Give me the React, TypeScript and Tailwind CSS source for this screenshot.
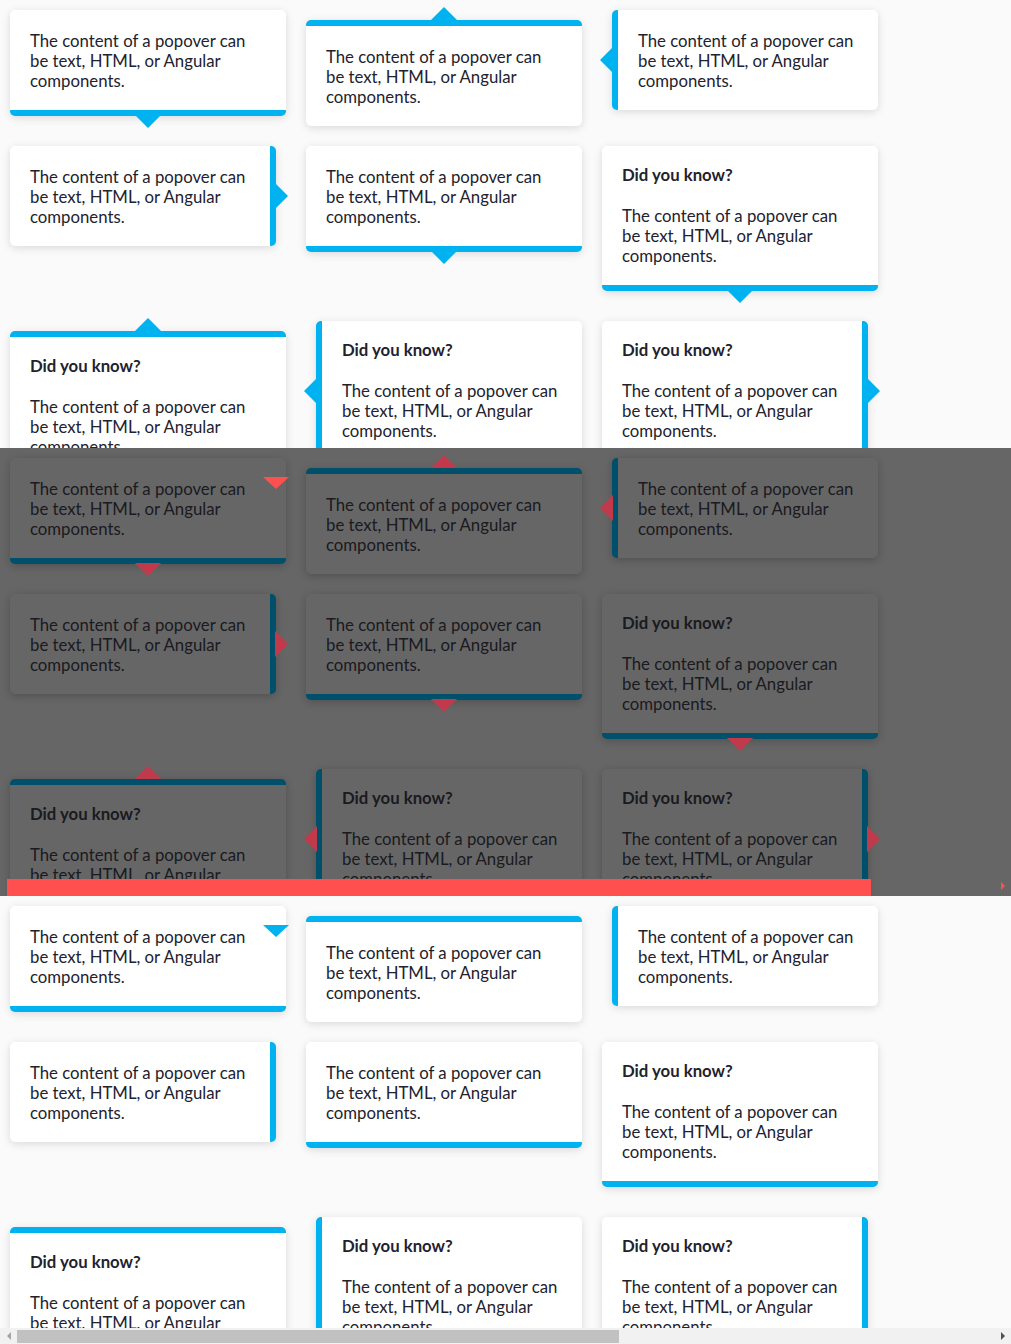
import React from "react";

type Place = "top" | "bottom" | "left" | "right";
type Mode = "expected" | "diff" | "actual";

const items: { place: Place; title?: boolean }[] = [
  { place: "bottom" },
  { place: "top" },
  { place: "left" },
  { place: "right" },
  { place: "bottom" },
  { place: "bottom", title: true },
  { place: "top", title: true },
  { place: "left", title: true },
  { place: "right", title: true },
];

const cellPad: Record<Place, string> = {
  top: "pt-[10px] w-[276px]",
  bottom: "pb-[10px] w-[276px]",
  left: "pl-[10px] w-[276px]",
  right: "pr-[10px] w-[276px]",
};

const cardBorder: Record<Place, string> = {
  top: "border-t-[6px] w-[276px]",
  bottom: "border-b-[6px] w-[276px]",
  left: "border-l-[6px] w-[266px]",
  right: "border-r-[6px] w-[266px]",
};

const arrowShape: Record<Place, string> = {
  bottom: "left-1/2 -translate-x-1/2 -bottom-[18px] border-x-[13px] border-x-transparent border-t-[13px]",
  top: "left-1/2 -translate-x-1/2 -top-[19px] border-x-[13px] border-x-transparent border-b-[13px]",
  left: "top-1/2 -translate-y-1/2 -left-[18px] border-y-[13px] border-y-transparent border-r-[13px]",
  right: "top-1/2 -translate-y-1/2 -right-[18px] border-y-[13px] border-y-transparent border-l-[13px]",
};

const arrowColorExpected: Record<Place, string> = {
  bottom: "border-t-[#00b2ef]",
  top: "border-b-[#00b2ef]",
  left: "border-r-[#00b2ef]",
  right: "border-l-[#00b2ef]",
};

const arrowColorDiff: Record<Place, string> = {
  bottom: "border-t-[#c13a4c]",
  top: "border-b-[#c13a4c]",
  left: "border-r-[#c13a4c]",
  right: "border-l-[#c13a4c]",
};

function Popover({ place, title, mode, first }: { place: Place; title?: boolean; mode: Mode; first: boolean }) {
  const diff = mode === "diff";
  const cardCls = diff
    ? "bg-[#666666] border-[#00506b] shadow-[0_2px_8px_rgba(0,0,0,0.22)] text-[#1a1a20]"
    : "bg-white border-[#00b2ef] shadow-[0_2px_8px_rgba(0,0,0,0.13)] text-[#22222e]";
  const showArrow = mode !== "actual";
  return (
    <div className={`m-[10px] ${cellPad[place]} flex ${place === "right" ? "justify-start" : "justify-end"}`}>
      <div className={`relative rounded-[5px] ${cardBorder[place]} ${cardCls}`}>
        {title && (
          <div className="px-5 pt-[19px] text-[16.75px] leading-5 font-bold whitespace-nowrap">Did you know?</div>
        )}
        <div className="px-5 pt-[21px] pb-[19px] text-[16.75px] leading-5 whitespace-nowrap">
          The content of a popover can
          <br />
          be text, HTML, or Angular
          <br />
          components.
        </div>
        {showArrow && (
          <div
            className={`absolute w-0 h-0 ${arrowShape[place]} ${diff ? arrowColorDiff[place] : arrowColorExpected[place]}`}
          />
        )}
        {first && mode === "actual" && (
          <div className="absolute left-[253px] top-[19px] w-0 h-0 border-x-[13px] border-x-transparent border-t-[12px] border-t-[#00b2ef]" />
        )}
        {first && mode === "diff" && (
          <div className="absolute left-[253px] top-[19px] w-0 h-0 border-x-[13px] border-x-transparent border-t-[12px] border-t-[#ff4f4f]" />
        )}
      </div>
    </div>
  );
}

function Grid({ mode }: { mode: Mode }) {
  return (
    <div className="flex flex-wrap items-start">
      {items.map((it, i) => (
        <Popover key={i} place={it.place} title={it.title} mode={mode} first={i === 0} />
      ))}
    </div>
  );
}

export default function App() {
  return (
    <div className="w-[1011px] font-['Lato',sans-serif]">
      {/* expected */}
      <div className="h-[448px] overflow-hidden bg-[#fafafa]">
        <Grid mode="expected" />
      </div>
      {/* diff */}
      <div className="relative h-[448px] overflow-hidden bg-[#666666]">
        <Grid mode="diff" />
        <div className="absolute left-[7px] top-[431px] w-[864px] h-[17px] bg-[#ff4f4f]" />
        <div className="absolute left-[1001px] top-[434px] w-0 h-0 border-y-[4px] border-y-transparent border-l-[4px] border-l-[#ff4f4f]" />
      </div>
      {/* actual */}
      <div className="h-[448px] flex flex-col bg-[#fafafa]">
        <div className="h-[432px] overflow-hidden">
          <Grid mode="actual" />
        </div>
        <div className="h-[16px] bg-[#f1f1f1] flex items-center">
          <div className="w-[17px] flex justify-center">
            <div className="w-0 h-0 border-y-[4px] border-y-transparent border-r-[4px] border-r-[#a3a3a3]" />
          </div>
          <div className="w-[602px] h-[13px] bg-[#c1c1c1]" />
          <div className="flex-1" />
          <div className="w-[17px] flex justify-center">
            <div className="w-0 h-0 border-y-[4px] border-y-transparent border-l-[4px] border-l-[#505050]" />
          </div>
        </div>
      </div>
    </div>
  );
}
